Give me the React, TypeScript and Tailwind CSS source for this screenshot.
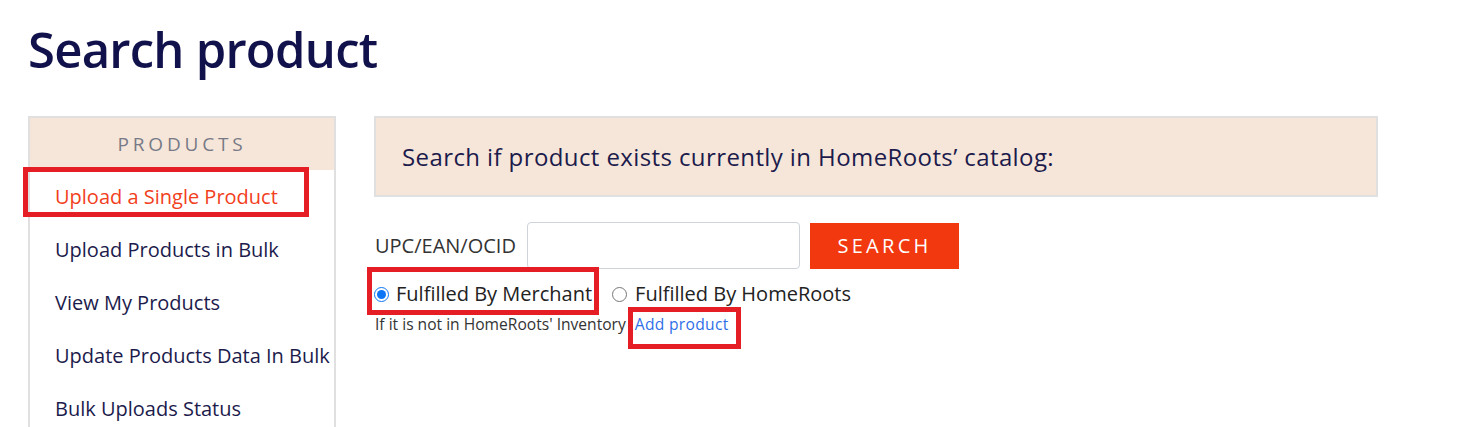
import React, { useState } from 'react';

const menuItems = [
  'Upload a Single Product',
  'Upload Products in Bulk',
  'View My Products',
  'Update Products Data In Bulk',
  'Bulk Uploads Status',
];

export default function App() {
  const [fulfilment, setFulfilment] = useState<'merchant' | 'homeroots'>('merchant');
  const [code, setCode] = useState('');

  return (
    <div className="relative h-[427px] overflow-hidden bg-white pl-[28px] font-['Open_Sans',sans-serif]">
      <h1 className="pt-[17px] text-[49px] leading-[64px] font-semibold text-[#11114b] tracking-[-0.75px]">
        Search product
      </h1>

      <div className="mt-[35px] flex gap-[38px]">
        {/* sidebar */}
        <div className="w-[308px] h-[340px] border-2 border-[#e0e0e0] border-b-0">
          <div className="h-[52px] bg-[#f6e6da] flex items-center justify-center text-[19px] tracking-[3.8px] text-[#777a86]">
            PRODUCTS
          </div>
          <ul>
            {menuItems.map((item, idx) => (
              <li
                key={item}
                className={`h-[53px] pl-[25px] flex items-center text-[20px] ${
                  idx === 0 ? 'text-[#f2401c]' : 'text-[#1c1b4c]'
                }`}
              >
                {item}
              </li>
            ))}
          </ul>
        </div>

        {/* main */}
        <div className="w-[1004px]">
          <div className="h-[81px] border-2 border-[#e0e0e0] bg-[#f6e6da] pl-[26px] flex items-center text-[24px] tracking-[0.4px] text-[#1c1b4c]">
            Search if product exists currently in HomeRoots’ catalog:
          </div>

          <div className="mt-[25px] flex items-center">
            <label className="w-[153px] pl-px text-[20px] text-[#333]">UPC/EAN/OCID</label>
            <input
              value={code}
              onChange={(e) => setCode(e.target.value)}
              className="w-[273px] h-[47px] rounded border border-[#ced4da] px-3 outline-none"
            />
            <button className="ml-[10px] w-[149px] h-[46px] bg-[#f2380f] text-white text-[20px] tracking-[3.3px]">
              SEARCH
            </button>
          </div>

          <div className="mt-[11px] h-[28px] flex items-center text-[20px] text-[#222]">
            <label className="flex items-center">
              <input
                type="radio"
                checked={fulfilment === 'merchant'}
                onChange={() => setFulfilment('merchant')}
                className="w-[15px] h-[15px] accent-[#0b75f5]"
              />
              <span className="ml-[7px]">Fulfilled By Merchant</span>
            </label>
            <label className="ml-[20px] flex items-center">
              <input
                type="radio"
                checked={fulfilment === 'homeroots'}
                onChange={() => setFulfilment('homeroots')}
                className="w-[15px] h-[15px]"
              />
              <span className="ml-[8px]">Fulfilled By HomeRoots</span>
            </label>
          </div>

          <div className="mt-[6px] h-[20px] leading-[20px] text-[15.6px] text-[#333] pl-px">
            If it is not in HomeRoots' Inventory
            <a className="ml-[9px] text-[#2f6fe8] tracking-[0.3px]">Add product</a>
          </div>
        </div>
      </div>

      {/* red annotation boxes */}
      <div className="absolute left-[23px] top-[167px] w-[286px] h-[50px] border-[5px] border-[#e51d24]" />
      <div className="absolute left-[367px] top-[267px] w-[232px] h-[48px] border-[5px] border-[#e51d24]" />
      <div className="absolute left-[628px] top-[307px] w-[113px] h-[42px] border-[5px] border-[#e51d24]" />
    </div>
  );
}
